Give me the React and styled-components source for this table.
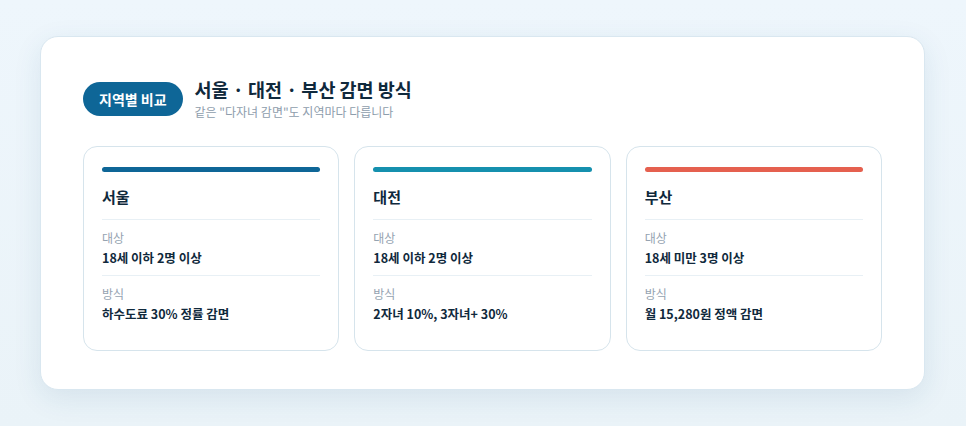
import styled, { createGlobalStyle } from 'styled-components'

const GlobalStyle = createGlobalStyle`
  html, body {
    margin: 0;
    padding: 0;
    background: #eef6fb;
  }
  body {
    font-family: 'Noto Sans CJK KR', 'Noto Sans', sans-serif;
  }
`

const Page = styled.div`
  min-height: 426px;
  box-sizing: border-box;
  padding: 36px 41px 37px 40px;
  background: linear-gradient(180deg, #eef6fc 0%, #eaf3f8 100%);
`

const Panel = styled.section`
  background: #ffffff;
  border: 1px solid #d9e7f0;
  border-radius: 18px;
  box-shadow: 0 8px 28px rgba(30, 90, 130, 0.1);
  padding: 40px 42px 38px 42px;
`

const Header = styled.header`
  display: flex;
  align-items: center;
  gap: 12px;
`

const Badge = styled.span`
  display: inline-flex;
  align-items: center;
  justify-content: center;
  height: 34px;
  padding: 0 16px;
  border-radius: 17px;
  background: #0e6697;
  color: #ffffff;
  font-size: 14px;
  font-weight: 700;
  margin-top: 1px;
`

const Titles = styled.div`
  display: flex;
  flex-direction: column;
`

const Title = styled.h1`
  margin: 0;
  font-size: 18.5px;
  line-height: 24px;
  font-weight: 700;
  color: #10293c;
`

const Sub = styled.p`
  margin: 3px 0 0;
  font-size: 12px;
  line-height: 16px;
  color: #8e9dac;
`

const Grid = styled.div`
  display: grid;
  grid-template-columns: repeat(3, 1fr);
  gap: 15px;
  margin-top: 26px;
`

const Card = styled.article`
  border: 1px solid #d6e4ec;
  border-radius: 14px;
  padding: 20px 18px 19px;
`

const Bar = styled.div`
  height: 5px;
  border-radius: 3px;
  background: ${p => p.$color};
`

const City = styled.h2`
  margin: 14px 0 0;
  font-size: 15px;
  line-height: 22px;
  font-weight: 700;
  color: #10293c;
  padding-bottom: 11px;
  border-bottom: 1px solid #e8f0f5;
`

const Row = styled.div`
  padding: 9px 0 7px;
  & + & {
    border-top: 1px solid #e8f0f5;
  }
`

const Label = styled.div`
  font-size: 12px;
  line-height: 18px;
  color: #95a3b1;
`

const Value = styled.div`
  margin-top: 1px;
  font-size: 12.5px;
  line-height: 20px;
  font-weight: 700;
  color: #10293c;
`

const regions = [
  { city: '서울', color: '#0e6697', target: '18세 이하 2명 이상', method: '하수도료 30% 정률 감면' },
  { city: '대전', color: '#1590ae', target: '18세 이하 2명 이상', method: '2자녀 10%, 3자녀+ 30%' },
  { city: '부산', color: '#e5604f', target: '18세 미만 3명 이상', method: '월 15,280원 정액 감면' },
]

export default function App() {
  return (
    <Page>
      <GlobalStyle />
      <Panel>
        <Header>
          <Badge>지역별 비교</Badge>
          <Titles>
            <Title>서울 · 대전 · 부산 감면 방식</Title>
            <Sub>같은 "다자녀 감면"도 지역마다 다릅니다</Sub>
          </Titles>
        </Header>
        <Grid>
          {regions.map(r => (
            <Card key={r.city}>
              <Bar $color={r.color} />
              <City>{r.city}</City>
              <Row>
                <Label>대상</Label>
                <Value>{r.target}</Value>
              </Row>
              <Row>
                <Label>방식</Label>
                <Value>{r.method}</Value>
              </Row>
            </Card>
          ))}
        </Grid>
      </Panel>
    </Page>
  )
}
